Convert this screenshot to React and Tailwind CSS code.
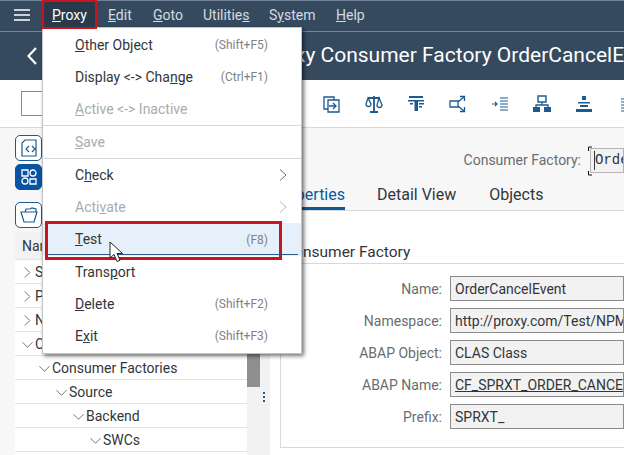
import React from 'react';

const font = { fontFamily: 'Roboto, "Noto Sans", sans-serif' };

const topMenu = [
    { pre: '', key: 'E', post: 'dit', cls: 'w-[24px]' },
    { pre: '', key: 'G', post: 'oto', cls: 'w-[29px]' },
    { pre: 'Utilitie', key: 's', post: '', cls: 'w-[45px]' },
    { pre: 'S', key: 'y', post: 'stem', cls: 'w-[46px]' },
    { pre: '', key: 'H', post: 'elp', cls: 'w-[29px]' },
];

const menuItems = [
    { pre: '', key: 'O', post: 'ther Object', hint: '(Shift+F5)' },
    { pre: 'Display <-> Cha', key: 'n', post: 'ge', hint: '(Ctrl+F1)' },
    { pre: '', key: 'A', post: 'ctive <-> Inactive', disabled: true, divider: true },
    { pre: '', key: 'S', post: 'ave', disabled: true, divider: true },
    { pre: 'C', key: 'h', post: 'eck', arrow: true },
    { pre: 'Acti', key: 'v', post: 'ate', disabled: true, arrow: true },
    { pre: '', key: 'T', post: 'est', hint: '(F8)', active: true },
    { pre: 'Trans', key: 'p', post: 'ort' },
    { pre: '', key: 'D', post: 'elete', hint: '(Shift+F2)' },
    { pre: 'E', key: 'x', post: 'it', hint: '(Shift+F3)' },
];

const treeRows = [
    { label: 'Service', level: 0, open: false },
    { label: 'Proxy', level: 0, open: false },
    { label: 'Name', level: 0, open: false },
    { label: 'Consumer', level: 0, open: true },
    { label: 'Consumer Factories', level: 1, open: true },
    { label: 'Source', level: 2, open: true },
    { label: 'Backend', level: 3, open: true },
    { label: 'SWCs', level: 4, open: true },
];

const fields = [
    { label: 'Name:', value: 'OrderCancelEvent' },
    { label: 'Namespace:', value: 'http://proxy.com/Test/NPM/Order/Cancel' },
    { label: 'ABAP Object:', value: 'CLAS Class' },
    { label: 'ABAP Name:', value: 'CF_SPRXT_ORDER_CANCEL_EVENT', link: true },
    { label: 'Prefix:', value: 'SPRXT_' },
];

const toolIcons = [
    <g key="a" fill="none" stroke="currentColor" strokeWidth="1.3"><path d="M5 14H1V2h10v3" /><path d="M5 5h11v12H5z" /><path d="M6 11h7M10 8l3 3-3 3" /></g>,
    <g key="b" fill="none" stroke="currentColor" strokeWidth="1.3"><path d="M9 1v15M5 17h8M3 3h12" strokeWidth="1.8" /><path d="M3 3 1 9a2.5 2.5 0 0 0 5 0zM14 3l-2 7a2.5 2.5 0 0 0 5 0z" /></g>,
    <g key="c" fill="currentColor"><path d="M2 1h14v2H2zM1 5h16v1.500H11V16H7.500V6.500H1z" /><path d="M12 8h5v1.500h-5zM12 11h3v1.500h-3zM3 8h3v1.500H3z" /></g>,
    <g key="d" fill="none" stroke="currentColor" strokeWidth="1.3"><path d="M1 6h8v6H1zM9 7l6-5M11 1.500h4.500V6M9 11l6 5M11 16.500h4.500V12" /></g>,
    <g key="e" fill="none" stroke="currentColor" strokeWidth="1.200"><path d="M1 9h5M4 7l2 2-2 2M9 3h8M9 6h8M9 9h8M9 12h8M9 15h8" /></g>,
    <g key="f"><path d="M5 1h8v6H5z" fill="none" stroke="currentColor" strokeWidth="1.400" /><path d="M9 7v3M3 12v-2h12v2" fill="none" stroke="currentColor" strokeWidth="1.300" /><path d="M0 12h7v5H0zM11 12h7v5h-7z" fill="currentColor" /></g>,
    <g key="g" fill="currentColor"><path d="M7 1h4v4H7zM3 7h12v1.500H3zM5 10h8v2H5zM1 14h16v3H1z" /></g>,
    <g key="h" fill="none" stroke="currentColor" strokeWidth="1.200"><path d="M4 4h14M4 7h14M4 10h14M4 13h14M4 16h14" /></g>,
];

const Chevron = ({ open }) => (
    <svg viewBox="0 0 12 12" className="w-[11px] h-[11px] shrink-0" fill="none" stroke="#5f6a75" strokeWidth="1">
        <path d={open ? 'M.5 3.500 6 9l5.500-5.500' : 'M3 .5 8.500 6 3 11.500'} />
    </svg>
);

const TopBar = () => (
    <div className="h-8 shrink-0 flex items-center pb-[2px] bg-[#354a5f] border-b border-[#74879a] border-t border-t-[#6d8094] text-[14px] text-[#d5dbe1]">
        <svg viewBox="0 0 16 12" className="w-4 h-3 ml-[14px] shrink-0" stroke="#fff" strokeWidth="1.500"><path d="M0 1h16M0 6h16M0 11h16" /></svg>
        <div className="flex gap-[21px] ml-[78px]">
            {topMenu.map(m => (
                <span key={m.pre + m.key} className={`${m.cls} whitespace-nowrap`}>{m.pre}<u>{m.key}</u>{m.post}</span>
            ))}
        </div>
    </div>
);

const TitleBar = () => (
    <div className="h-[48px] shrink-0 flex items-center bg-[#354a5f] text-white overflow-hidden">
        <svg viewBox="0 0 10 18" className="w-[10px] h-[18px] ml-[27px] shrink-0" fill="none" stroke="#fff" strokeWidth="2.200"><path d="M9 1 1.500 9 9 17" /></svg>
        <span className="ml-[153px] text-[21px] whitespace-nowrap">Display Proxy Consumer Factory OrderCancelEvent</span>
    </div>
);

const Toolbar = () => (
    <div className="h-[48px] shrink-0 flex items-center bg-white border-b border-[#d9d9d9]">
        <div className="w-[60px] h-[25px] ml-[21px] border border-[#8c8c8c] shrink-0" />
        <div className="flex gap-[24px] ml-[242px] text-[#1d5a8f] shrink-0">
            {toolIcons.map((icon, i) => (
                <svg key={i} viewBox="0 0 18 18" className="w-[18px] h-[18px] shrink-0">{icon}</svg>
            ))}
        </div>
    </div>
);

const SideButton = ({ active, children, className = '' }) => (
    <div className={`w-[27px] h-[26px] rounded-[5px] flex items-center justify-center border ${active ? 'bg-[#0854a0] border-[#0854a0] text-white' : 'bg-white border-[#1d5a8f] text-[#1d5a8f]'} ${className}`}>
        {children}
    </div>
);

const LeftPanel = () => (
    <div className="w-[260px] shrink-0 flex flex-col bg-[#f7f7f7] pl-[15px]">
        <SideButton className="mt-[7px]">
            <svg viewBox="0 0 18 18" className="w-[18px] h-[18px]" fill="none" stroke="currentColor" strokeWidth="1.200"><path d="M5 1h11v16H2V4zM9 7 6 10l3 3M12 7l3 3-3 3" /></svg>
        </SideButton>
        <SideButton active className="mt-[3px]">
            <svg viewBox="0 0 18 18" className="w-[18px] h-[18px]" fill="none" stroke="currentColor" strokeWidth="1.300"><path d="M2 2h6v6H2zM2 13a3 3 0 1 0 6 0 3 3 0 1 0-6 0zM10 5a3 3 0 1 0 6 0 3 3 0 1 0-6 0zM10 11h6v5h-6z" /></svg>
        </SideButton>
        <SideButton className="mt-[12px]">
            <svg viewBox="0 0 18 18" className="w-[18px] h-[18px]" fill="none" stroke="currentColor" strokeWidth="1.200"><path d="M1 6h16l-3 10H4zM5 6l1-3h4l2-1 4 1v3" /></svg>
        </SideButton>
        <div className="flex-1 flex mt-[4px] min-h-0">
            <div className="w-[232px] shrink-0 bg-white text-[14px] text-[#32363a]">
                <div className="h-[28px] flex items-center pl-[7px] pt-[2px] bg-[#f2f2f2] border-b border-[#e4e4e4]">Name</div>
                {treeRows.map(row => (
                    <div
                        key={row.label}
                        className={`h-[24px] flex items-center gap-[2px] pt-[2px] border-b border-[#e5e5e5] ${['pl-[7px]', 'pl-[24px]', 'pl-[41px]', 'pl-[58px]', 'pl-[75px]'][row.level]}`}
                    >
                        <Chevron open={row.open} />
                        <span className="whitespace-nowrap">{row.label}</span>
                    </div>
                ))}
            </div>
            <div className="w-[13px] shrink-0 bg-[#f2f2f2] flex flex-col">
                <div className="h-[155px] bg-[#8f8f8f]" />
            </div>
        </div>
    </div>
);

const RightPanel = () => (
    <div className="flex-1 min-w-0 flex flex-col bg-white overflow-hidden">
        <div className="h-[83px] shrink-0 bg-[#f7f7f7] border-b border-[#d9d9d9] flex flex-col">
            <div className="flex items-center justify-end h-[25px] mt-[20px] text-[14px]">
                <span className="text-[#6a6d70] mr-[9px] whitespace-nowrap">Consumer Factory:</span>
                <div className="w-[34px] h-[25px] shrink-0 bg-[#f2f2f2] border border-[#b5b5b5] overflow-hidden pl-[4px] leading-[23px] whitespace-nowrap text-[#32363a]" style={{ fontFamily: '"Liberation Mono", monospace' }}>
                    Orde
                </div>
            </div>
            <div className="flex items-end h-[38px] text-[16px] text-[#32363a]">
                <span className="ml-[10px] w-[65px] h-[26px] text-[#0a5a9e] border-b-[3px] border-[#0a5a9e] whitespace-nowrap flex justify-end leading-[22px]">Properties</span>
                <span className="ml-[32px] h-[26px] whitespace-nowrap leading-[22px]">Detail View</span>
                <span className="ml-[33px] h-[26px] whitespace-nowrap leading-[22px]">Objects</span>
            </div>
        </div>
        <div className="ml-[10px] mt-[27px] h-[210px] border-l border-b border-[#d9d9d9]">
            <div className="h-[26px] border-b border-[#d9d9d9] text-[15.5px] text-[#32363a] pl-[3px] whitespace-nowrap leading-[28px]">Consumer Factory</div>
            <div className="flex flex-col gap-[7px] mt-[12px] text-[14px]">
                {fields.map(f => (
                    <div key={f.label} className="flex items-center h-[25px]">
                        <span className="w-[169px] pr-[8px] pt-[2px] text-right text-[#6a6d70] whitespace-nowrap shrink-0">{f.label}</span>
                        <div className={`flex-1 min-w-0 h-[25px] pl-[4px] leading-[25px] overflow-hidden whitespace-nowrap bg-[#f2f2f2] border border-[#8c8c8c] text-[#32363a] ${f.link ? 'underline' : ''}`}>{f.value}</div>
                    </div>
                ))}
            </div>
        </div>
    </div>
);

const ProxyMenu = () => (
    <div className="absolute left-[42px] top-[27px] w-[260px] h-[327px] pt-[1px] bg-white border border-[#c4c4c4] shadow-[2px_2px_4px_rgba(0,0,0,0.55)] text-[14px] text-[#32363a]">
        {menuItems.map(item => (
            <div
                key={item.key + item.post}
                className={`flex items-center pl-[32px] pr-[33px] ${item.divider ? 'border-b border-[#d9d9d9] h-[33px]' : ''} ${item.active ? 'bg-[#e5f0fa] h-[33px]' : ''} ${!item.divider && !item.active ? 'h-[32px]' : ''} ${item.disabled ? 'text-[#a9abad]' : ''}`}
            >
                <span className="flex-1 whitespace-nowrap">{item.pre}<u>{item.key}</u>{item.post}</span>
                {item.hint && <span className="text-[12px] text-[#7f8285]">{item.hint}</span>}
                {item.arrow && (
                    <svg viewBox="0 0 8 12" className="w-[8px] h-[12px] -mr-[19px]" fill="none" stroke={item.disabled ? '#b5b7b9' : '#5b738b'} strokeWidth="1"><path d="M1 .5 7 6l-6 5.500" /></svg>
                )}
            </div>
        ))}
    </div>
);

const Cursor = () => (
    <svg viewBox="0 0 16 26" className="absolute left-[109px] top-[241px] w-[16px] h-[26px]" fill="#fff" stroke="#222" strokeWidth="1">
        <path d="M1 1v16l4-3.500 3 7 3-1.300-3-6.700h5.500z" />
    </svg>
);

// focus brackets and caret on the Consumer Factory input
const FocusMark = () => (
    <svg viewBox="0 0 10 30" className="absolute left-[587px] top-[146px] w-[10px] h-[30px]" fill="none" stroke="#111" strokeWidth="1">
        <path d="M5 1H1.500v4M1.500 25v4H5" />
        <path d="M7.500 5v19" stroke="#32363a" />
    </svg>
);

export default function App() {
    return (
        <div className="relative w-[624px] h-[455px] overflow-hidden bg-white flex flex-col" style={font}>
            <TopBar />
            <TitleBar />
            <Toolbar />
            <div className="flex-1 flex min-h-0">
                <LeftPanel />
                <div className="w-[10px] shrink-0 bg-[#f2f2f2] flex flex-col items-start gap-[2px] pl-[3px] pt-[264px]">
                    <i className="w-[2px] h-[2px] bg-[#1d5a8f]" />
                    <i className="w-[2px] h-[2px] bg-[#1d5a8f]" />
                    <i className="w-[2px] h-[2px] bg-[#1d5a8f]" />
                </div>
                <RightPanel />
            </div>
            <ProxyMenu />
            <FocusMark />
            {/* Proxy tab sits over the menu's top edge */}
            <div className="absolute left-[42px] top-0 w-[55px] h-[29px] bg-[#29394a] border-[2px] border-[#c8141e] text-[14px] text-white leading-[27px] pl-[8px]"><u>P</u>roxy</div>
            <div className="absolute left-[45px] top-[221px] w-[237px] h-[39px] border-[3px] border-[#c8141e]" />
            <div className="absolute left-[48px] top-[254px] w-[250px] h-px bg-[#2a5a85]" />
            <Cursor />
        </div>
    );
}
